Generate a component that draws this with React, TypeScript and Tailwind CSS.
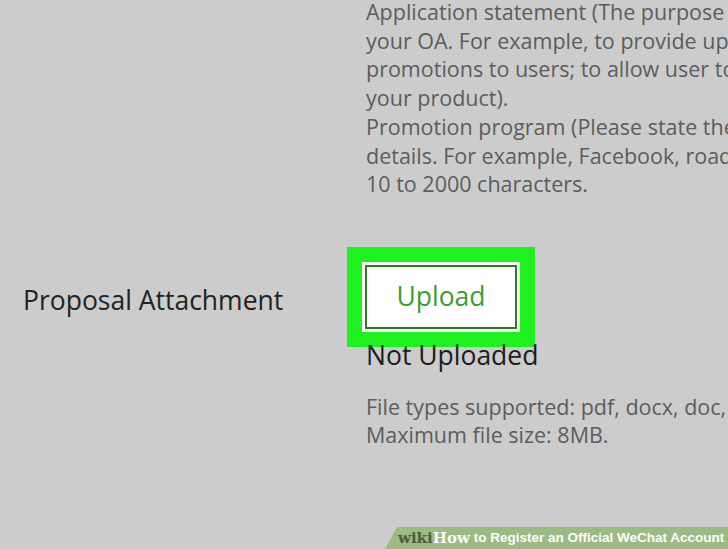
export default function App() {
  const sans = { fontFamily: '"Open Sans", "Noto Sans", sans-serif' }

  const statement = [
    'Application statement (The purpose of this application for',
    'your OA. For example, to provide updates, news and',
    'promotions to users; to allow user to learn more about',
    'your product).',
    'Promotion program (Please state the promotion program',
    'details. For example, Facebook, roadshows, etc.). Limit',
    '10 to 2000 characters.',
  ]

  return (
    <div className="relative w-[728px] h-[549px] overflow-hidden bg-[#cccccc]" style={sans}>
      {/* description block */}
      <div className="pl-[366px] -mt-[2px] text-[21.5px] leading-[28.7px] text-[#5c5c5c] whitespace-nowrap">
        {statement.map((line, i) => (
          <div key={i}>{line}</div>
        ))}
      </div>

      {/* attachment row */}
      <div className="flex mt-[63px]">
        <div className="w-[362px] shrink-0 pl-[23px] pt-[21px] text-[26.5px] leading-[34px] text-[#222222] whitespace-nowrap">
          Proposal Attachment
        </div>
        <div className="flex flex-col">
          <div className="w-[158px] h-[70px] bg-white p-[3px] shadow-[0_0_0_15px_#1ff01f]">
            <div className="h-full border-2 border-[#2d7a22] flex items-center justify-center">
              <span className="text-[26.5px] leading-[34px] text-[#3a9d2c] -mt-px">Upload</span>
            </div>
          </div>
          <div className="ml-[4px] mt-[6px] text-[26.5px] leading-[34px] text-[#1c1c1c] whitespace-nowrap">
            Not Uploaded
          </div>
          <div className="ml-[4px] mt-[21px] text-[21.5px] leading-[28px] text-[#5c5c5c] whitespace-nowrap">
            <div>File types supported: pdf, docx, doc, ppt, pptx</div>
            <div>Maximum file size: 8MB.</div>
          </div>
        </div>
      </div>

      {/* wikiHow watermark */}
      <div
        className="absolute bottom-0 right-0 w-[343px] h-[22px] bg-[#9cba83] flex items-center pl-[13px] whitespace-nowrap"
        style={{ clipPath: 'polygon(12px 0, 100% 0, 100% 100%, 0 100%)' }}
      >
        <span className="text-[15px] font-bold text-[#4d5e40]" style={{ fontFamily: '"DejaVu Serif", serif' }}>
          wiki
        </span>
        <span className="text-[15px] font-bold text-white" style={{ fontFamily: '"DejaVu Serif", serif' }}>
          How
        </span>
        <span className="ml-[4px] text-[13.5px] font-bold text-white" style={{ fontFamily: '"Liberation Sans", Arial, sans-serif' }}>
          to Register an Official WeChat Account
        </span>
      </div>
    </div>
  )
}
